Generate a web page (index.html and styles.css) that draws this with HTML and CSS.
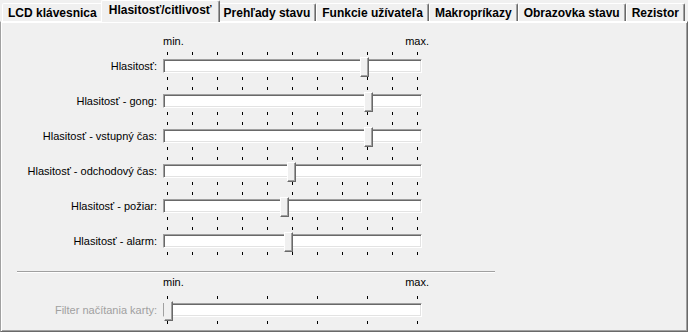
FILE: index.html
```html
<!DOCTYPE html>
<html lang="sk">
<head>
<meta charset="utf-8">
<title>Hlasitosť/citlivosť</title>
<link rel="stylesheet" href="styles.css">
</head>
<body>
<div class="window">
  <div class="tabs">
    <div class="tab">LCD klávesnica</div>
    <div class="tab selected">Hlasitosť/citlivosť</div>
    <div class="tab">Prehľady stavu</div>
    <div class="tab">Funkcie užívateľa</div>
    <div class="tab">Makropríkazy</div>
    <div class="tab">Obrazovka stavu</div>
    <div class="tab">Rezistor</div>
  </div>
  <div class="panel">
    <div class="scale-head"><span>min.</span><span>max.</span></div>

    <div class="row">
      <div class="label">Hlasitosť:</div>
      <div class="slider">
        <div class="ticks"><i></i><i></i><i></i><i></i><i></i><i></i><i></i><i></i><i></i><i></i><i></i></div>
        <div class="track"><div class="thumb" style="left:196px"></div></div>
        <div class="ticks"><i></i><i></i><i></i><i></i><i></i><i></i><i></i><i></i><i></i><i></i><i></i></div>
      </div>
    </div>

    <div class="row">
      <div class="label">Hlasitosť - gong:</div>
      <div class="slider">
        <div class="ticks"><i></i><i></i><i></i><i></i><i></i><i></i><i></i><i></i><i></i><i></i><i></i></div>
        <div class="track"><div class="thumb" style="left:200px"></div></div>
        <div class="ticks"><i></i><i></i><i></i><i></i><i></i><i></i><i></i><i></i><i></i><i></i><i></i></div>
      </div>
    </div>

    <div class="row">
      <div class="label">Hlasitosť - vstupný čas:</div>
      <div class="slider">
        <div class="ticks"><i></i><i></i><i></i><i></i><i></i><i></i><i></i><i></i><i></i><i></i><i></i></div>
        <div class="track"><div class="thumb" style="left:200px"></div></div>
        <div class="ticks"><i></i><i></i><i></i><i></i><i></i><i></i><i></i><i></i><i></i><i></i><i></i></div>
      </div>
    </div>

    <div class="row">
      <div class="label">Hlasitosť - odchodový čas:</div>
      <div class="slider">
        <div class="ticks"><i></i><i></i><i></i><i></i><i></i><i></i><i></i><i></i><i></i><i></i><i></i></div>
        <div class="track"><div class="thumb" style="left:123px"></div></div>
        <div class="ticks"><i></i><i></i><i></i><i></i><i></i><i></i><i></i><i></i><i></i><i></i><i></i></div>
      </div>
    </div>

    <div class="row">
      <div class="label">Hlasitosť - požiar:</div>
      <div class="slider">
        <div class="ticks"><i></i><i></i><i></i><i></i><i></i><i></i><i></i><i></i><i></i><i></i><i></i></div>
        <div class="track"><div class="thumb" style="left:116px"></div></div>
        <div class="ticks"><i></i><i></i><i></i><i></i><i></i><i></i><i></i><i></i><i></i><i></i><i></i></div>
      </div>
    </div>

    <div class="row">
      <div class="label">Hlasitosť - alarm:</div>
      <div class="slider">
        <div class="ticks"><i></i><i></i><i></i><i></i><i></i><i></i><i></i><i></i><i></i><i></i><i></i></div>
        <div class="track"><div class="thumb" style="left:120px"></div></div>
        <div class="ticks"><i></i><i></i><i></i><i></i><i></i><i></i><i></i><i></i><i></i><i></i><i></i></div>
      </div>
    </div>

    <div class="separator"></div>

    <div class="scale-head second"><span>min.</span><span>max.</span></div>

    <div class="row disabled">
      <div class="label">Filter načítania karty:</div>
      <div class="slider">
        <div class="ticks"><i></i><i></i><i></i><i></i><i></i><i></i></div>
        <div class="track"><div class="thumb" style="left:0px"></div></div>
        <div class="ticks"><i></i><i></i><i></i><i></i><i></i><i></i></div>
      </div>
    </div>
  </div>
</div>
</body>
</html>
```
FILE: styles.css
```css
html, body {
  margin: 0;
  padding: 0;
  background: #f0f0f0;
}

body {
  width: 688px;
  height: 332px;
  overflow: hidden;
  font-family: "Liberation Sans", Arial, sans-serif;
  font-size: 11px;
  color: #000;
}

.window {
  display: flex;
  flex-direction: column;
  width: 688px;
  height: 332px;
}

/* ---------- tabs ---------- */
.tabs {
  display: flex;
  align-items: flex-end;
  height: 21px;
  padding-left: 2px;
  position: relative;
  z-index: 2;
}

.tab {
  height: 18px;
  line-height: 18px;
  padding: 0 5px;
  font-size: 12px;
  font-weight: bold;
  white-space: nowrap;
  border-top: 1px solid #fff;
  border-left: 1px solid #fff;
  border-right: 1px solid #696969;
  box-shadow: inset -1px 0 0 #a0a0a0;
  border-radius: 2px 2px 0 0;
  box-sizing: border-box;
  background: #f0f0f0;
}

.tab:first-child {
  border-right-color: transparent;
  box-shadow: none;
}

.tab.selected {
  height: 22px;
  line-height: 19px;
  margin: 0 -2px -1px -2px;
  padding: 0 7px 0 7px;
  position: relative;
  z-index: 3;
}

/* ---------- panel ---------- */
.panel {
  flex: 1;
  box-sizing: border-box;
  border-top: 1px solid #fff;
  border-left: 1px solid #a0a0a0;
  border-right: 1px solid #696969;
  border-bottom: 1px solid #696969;
  box-shadow: inset 1px 1px 0 #fff, inset -1px -1px 0 #a0a0a0;
  padding-top: 13px;
  position: relative;
  z-index: 1;
}

.scale-head {
  display: flex;
  justify-content: space-between;
  margin-left: 162px;
  width: 266px;
  height: 13px;
  line-height: 13px;
}

.scale-head.second {
  margin-top: 3px;
  margin-bottom: 3px;
}

/* ---------- rows ---------- */
.row {
  display: flex;
  align-items: center;
  height: 35px;
}

.label {
  width: 156px;
  text-align: right;
  white-space: nowrap;
  padding-top: 1px;
}

.row.disabled .label {
  color: #a0a0a0;
}

.slider {
  margin-left: 6px;
  width: 259px;
  display: flex;
  flex-direction: column;
}

.ticks {
  display: flex;
  justify-content: space-between;
  padding: 0 4px 0 4px;
  height: 3px;
}

.ticks i {
  display: block;
  width: 1px;
  height: 3px;
  background: #000;
}

.slider .ticks:first-child {
  margin-bottom: 4px;
}

.slider .ticks:last-child {
  margin-top: 4px;
}

.track {
  position: relative;
  height: 14px;
  box-sizing: border-box;
  background: #fff;
  border-top: 1px solid #a0a0a0;
  border-left: 1px solid #a0a0a0;
  border-right: 1px solid #fff;
  border-bottom: 1px solid #fff;
  box-shadow: inset 1px 1px 0 #696969, inset -1px -1px 0 #e3e3e3;
}

.thumb {
  position: absolute;
  top: -3px;
  width: 9px;
  height: 20px;
  box-sizing: border-box;
  background: #f0f0f0;
  border-top: 1px solid #fff;
  border-left: 1px solid #fff;
  border-right: 1px solid #696969;
  border-bottom: 1px solid #696969;
  box-shadow: inset -1px -1px 0 #a0a0a0;
}

.row.disabled .thumb {
  border-top-color: #f0f0f0;
  border-left-color: #f0f0f0;
  left: -1px;
}

/* ---------- separator ---------- */
.separator {
  margin: 13px 0 0 16px;
  width: 478px;
  border-top: 1px solid #a0a0a0;
  border-bottom: 1px solid #fff;
}
```
